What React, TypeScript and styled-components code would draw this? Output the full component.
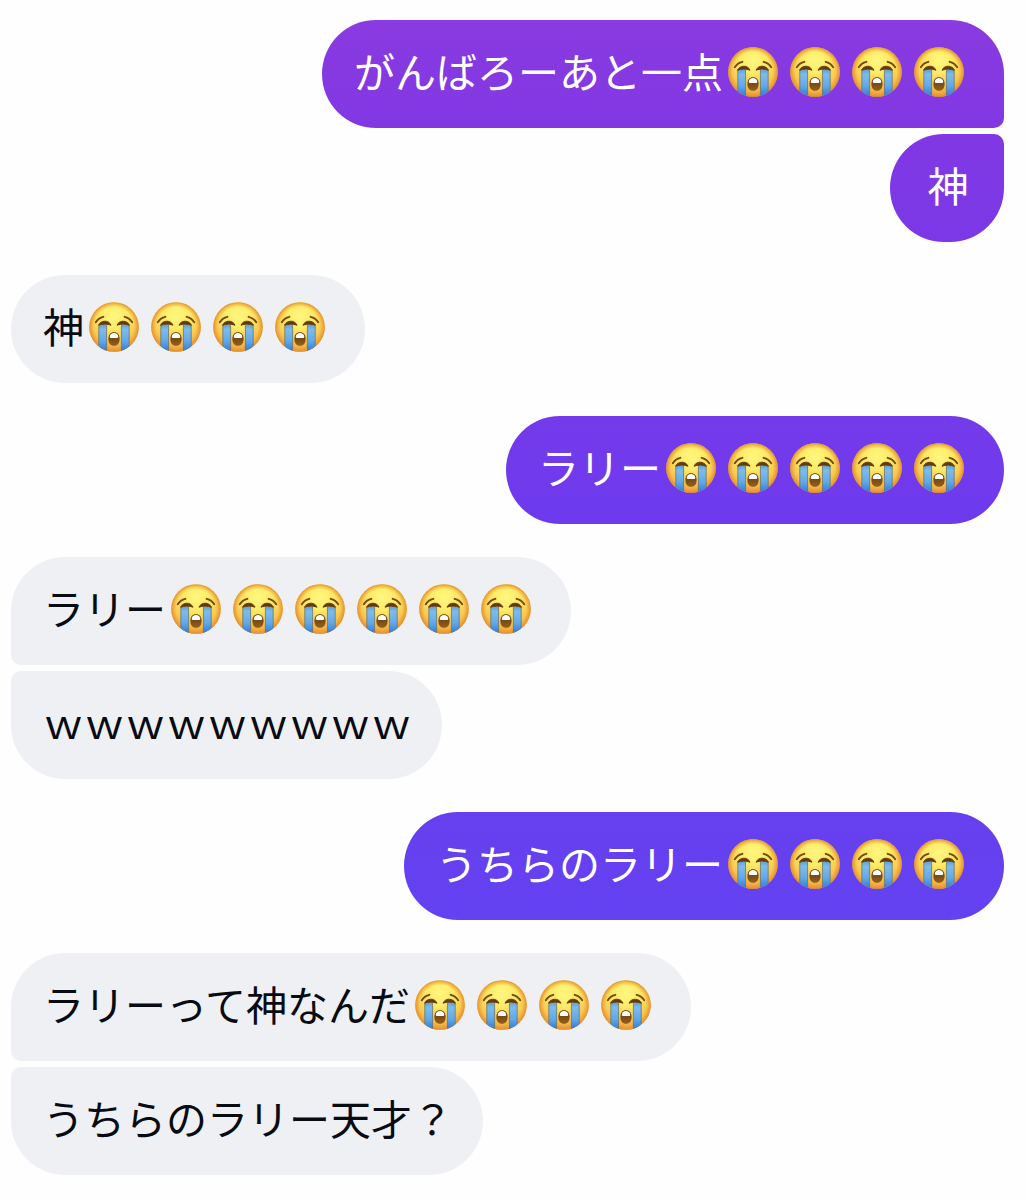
import React, { useId } from "react";
import styled, { createGlobalStyle, css } from "styled-components";

const GlobalStyle = createGlobalStyle`
  * { box-sizing: border-box; }
  body {
    margin: 0;
    background: #fefefe;
    font-family: "Noto Sans CJK JP", "Noto Sans", sans-serif;
  }
`;

type Side = "sent" | "received";
type Tint = [string, string];

interface Message {
  text: string;
  sobs?: number;
  tint?: Tint;
}

interface Group {
  side: Side;
  messages: Message[];
}

const groups: Group[] = [
  {
    side: "sent",
    messages: [
      { text: "がんばろーあと一点", sobs: 4, tint: ["#8a3ae0", "#8138e3"] },
      { text: "神", tint: ["#8038e4", "#7c38e7"] },
    ],
  },
  { side: "received", messages: [{ text: "神", sobs: 4 }] },
  { side: "sent", messages: [{ text: "ラリー", sobs: 5, tint: ["#743aea", "#6e3aee"] }] },
  { side: "received", messages: [{ text: "ラリー", sobs: 6 }, { text: "ｗｗｗｗｗｗｗｗｗ" }] },
  { side: "sent", messages: [{ text: "うちらのラリー", sobs: 4, tint: ["#673fee", "#6342f2"] }] },
  {
    side: "received",
    messages: [{ text: "ラリーって神なんだ", sobs: 4 }, { text: "うちらのラリー天才？" }],
  },
];

const Chat = styled.main`
  display: flex;
  flex-direction: column;
  gap: 33px;
  padding: 20px 22px 24px 11px;
`;

const MessageGroup = styled.section<{ $side: Side }>`
  display: flex;
  flex-direction: column;
  align-items: ${({ $side }) => ($side === "sent" ? "flex-end" : "flex-start")};
  gap: 6px;
`;

const sentColors = css<{ $tint?: Tint }>`
  color: #ffffff;
  background: linear-gradient(${({ $tint }) => ($tint ? $tint.join(", ") : "#8038e4, #6342f2")});
`;

const receivedColors = css`
  color: #080b12;
  background: #eff0f4;
`;

const Bubble = styled.div<{ $side: Side; $tint?: Tint; $first: boolean; $last: boolean }>`
  display: flex;
  align-items: center;
  justify-content: center;
  min-width: 114px;
  padding: 24px 30px 28px 32px;
  border-radius: 54px;
  ${({ $side }) => ($side === "sent" ? sentColors : receivedColors)}
  ${({ $side, $first }) =>
    !$first && (($side === "sent" && "border-top-right-radius: 10px;") || "border-top-left-radius: 10px;")}
  ${({ $side, $last }) =>
    !$last && (($side === "sent" && "border-bottom-right-radius: 10px;") || "border-bottom-left-radius: 10px;")}
`;

const Text = styled.span`
  padding-bottom: 4px;
  font-size: 41px;
  line-height: 52px;
`;

const Sobs = styled.span`
  display: flex;
  gap: 12px;
  padding: 0 10px 0 5px;
`;

const Face = styled.svg`
  display: block;
  flex: none;
  width: 50px;
  height: 50px;
`;

function SobbingFace() {
  const id = useId();
  const skin = `${id}skin`;
  const rim = `${id}rim`;
  const tear = `${id}tear`;
  const mouth = `${id}mouth`;
  const clip = `${id}clip`;
  return (
    <Face viewBox="0 0 50 50" role="img" aria-label="大泣き">
      <defs>
        <radialGradient id={skin} cx="0.5" cy="0.27" r="0.72">
          <stop offset="0" stopColor="#fff780" />
          <stop offset="0.35" stopColor="#fdeb68" />
          <stop offset="0.7" stopColor="#f8c950" />
          <stop offset="1" stopColor="#eda03c" />
        </radialGradient>
        <radialGradient id={rim} cx="0.5" cy="0.5" r="0.5">
          <stop offset="0.8" stopColor="#ee9f32" stopOpacity="0" />
          <stop offset="1" stopColor="#e08c2c" stopOpacity="0.9" />
        </radialGradient>
        <linearGradient id={tear} x1="0" y1="0" x2="0" y2="1">
          <stop offset="0" stopColor="#5e9fce" />
          <stop offset="0.2" stopColor="#7dbbec" />
          <stop offset="0.6" stopColor="#62a9ea" />
          <stop offset="1" stopColor="#2f77d2" />
        </linearGradient>
        <linearGradient id={mouth} x1="0" y1="0" x2="0" y2="1">
          <stop offset="0" stopColor="#5e3610" />
          <stop offset="1" stopColor="#94601c" />
        </linearGradient>
        <clipPath id={clip}>
          <circle cx="25" cy="25" r="24.8" />
        </clipPath>
      </defs>
      <circle cx="25" cy="25" r="24.8" fill={`url(#${skin})`} />
      <circle cx="25" cy="25" r="24.8" fill={`url(#${rim})`} />
      <g clipPath={`url(#${clip})`}>
        <path d="M9.8 22.5Q13.7 21.5 17.6 22.5V50H9.8Z" fill={`url(#${tear})`} />
        <path d="M32.4 22.5Q36.3 21.5 40.2 22.5V50H32.4Z" fill={`url(#${tear})`} />
        <path d="M9.8 23V50M17.6 23V50M32.4 23V50M40.2 23V50" fill="none" stroke="#66706a" strokeOpacity="0.75" strokeWidth="1" />
      </g>
      <path d="M6.8 20.2Q9.4 16 14.4 14.8M43.2 20.2Q40.6 16 35.6 14.8" fill="none" stroke="#74490e" strokeWidth="1.9" strokeLinecap="round" />
      <path d="M9.6 23.2C11.4 18.4 19.6 17.4 22 23.2C18 21.7 13.6 21.8 9.6 23.2ZM40.4 23.2C38.6 18.4 30.4 17.4 28 23.2C32 21.7 36.4 21.8 40.4 23.2Z" fill="#633b0b" stroke="#633b0b" strokeWidth="1" strokeLinejoin="round" />
      <path d="M19.4 37C19.4 32.6 21.5 30.2 25 30.2S30.6 32.6 30.6 37S28.5 43.8 25 43.8S19.4 41.4 19.4 37Z" fill={`url(#${mouth})`} />
      <path d="M20.7 34.8C21.1 32.3 22.6 31.1 25 31.1S28.9 32.3 29.3 34.8Q29.3 36.1 28 36.1H22Q20.7 36.1 20.7 34.8Z" fill="#ffffff" />
    </Face>
  );
}

export default function App() {
  return (
    <>
      <GlobalStyle />
      <Chat>
        {groups.map((group, g) => (
          <MessageGroup key={g} $side={group.side}>
            {group.messages.map((message, m) => (
              <Bubble
                key={m}
                $side={group.side}
                $tint={message.tint}
                $first={m === 0}
                $last={m === group.messages.length - 1}
              >
                <Text lang="ja">{message.text}</Text>
                {message.sobs && (
                  <Sobs>
                    {Array.from({ length: message.sobs }, (_, i) => (
                      <SobbingFace key={i} />
                    ))}
                  </Sobs>
                )}
              </Bubble>
            ))}
          </MessageGroup>
        ))}
      </Chat>
    </>
  );
}
